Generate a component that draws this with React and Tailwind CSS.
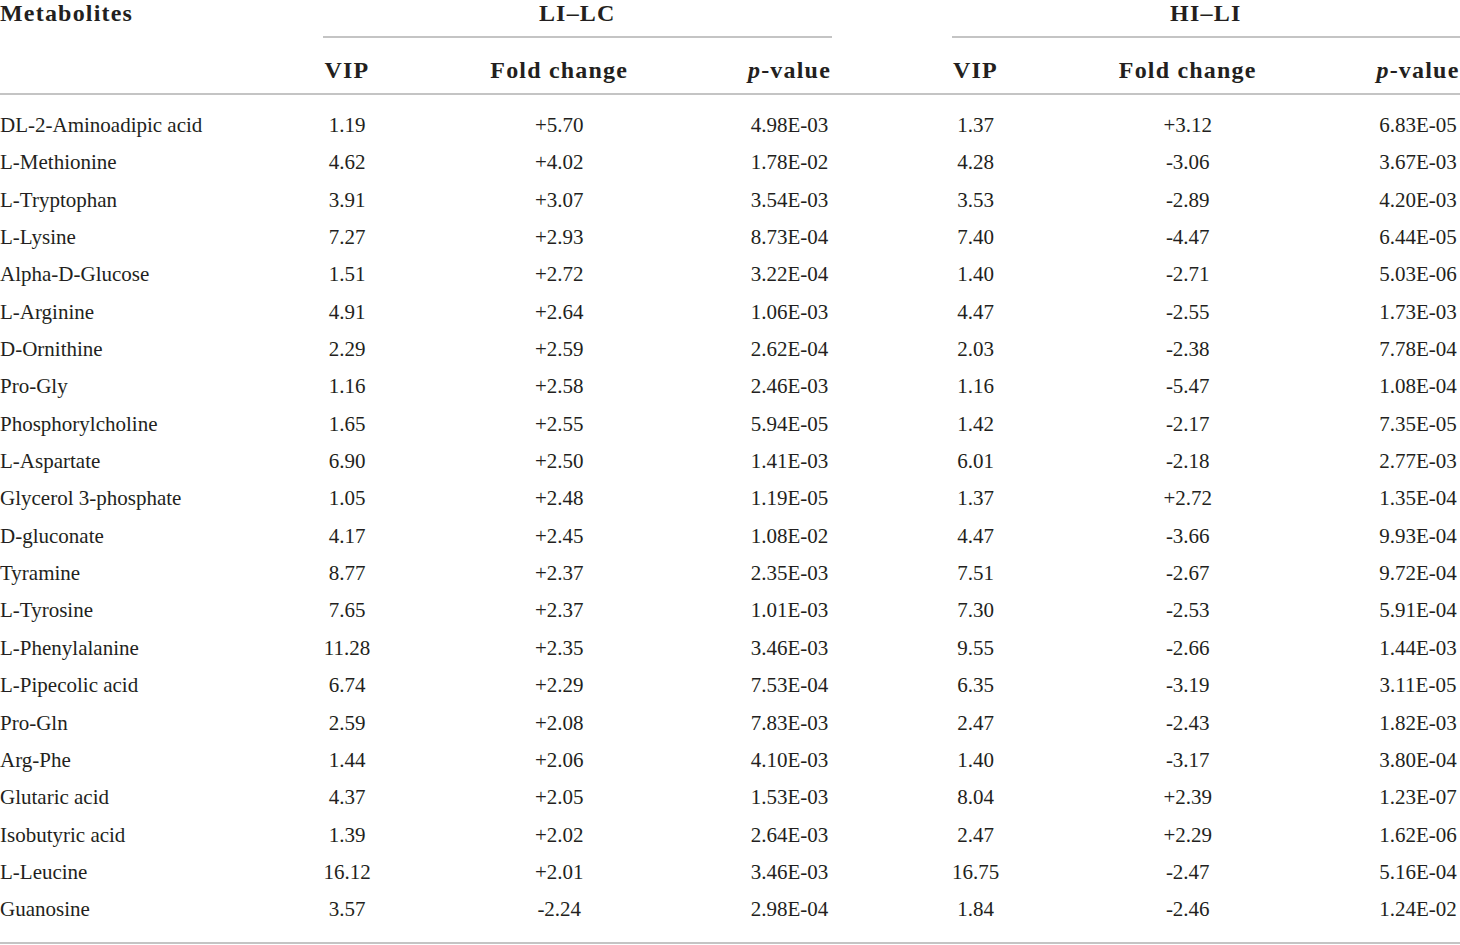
const ROWS = [
  ['DL-2-Aminoadipic acid', '1.19', '+5.70', '4.98E-03', '1.37', '+3.12', '6.83E-05'],
  ['L-Methionine', '4.62', '+4.02', '1.78E-02', '4.28', '-3.06', '3.67E-03'],
  ['L-Tryptophan', '3.91', '+3.07', '3.54E-03', '3.53', '-2.89', '4.20E-03'],
  ['L-Lysine', '7.27', '+2.93', '8.73E-04', '7.40', '-4.47', '6.44E-05'],
  ['Alpha-D-Glucose', '1.51', '+2.72', '3.22E-04', '1.40', '-2.71', '5.03E-06'],
  ['L-Arginine', '4.91', '+2.64', '1.06E-03', '4.47', '-2.55', '1.73E-03'],
  ['D-Ornithine', '2.29', '+2.59', '2.62E-04', '2.03', '-2.38', '7.78E-04'],
  ['Pro-Gly', '1.16', '+2.58', '2.46E-03', '1.16', '-5.47', '1.08E-04'],
  ['Phosphorylcholine', '1.65', '+2.55', '5.94E-05', '1.42', '-2.17', '7.35E-05'],
  ['L-Aspartate', '6.90', '+2.50', '1.41E-03', '6.01', '-2.18', '2.77E-03'],
  ['Glycerol 3-phosphate', '1.05', '+2.48', '1.19E-05', '1.37', '+2.72', '1.35E-04'],
  ['D-gluconate', '4.17', '+2.45', '1.08E-02', '4.47', '-3.66', '9.93E-04'],
  ['Tyramine', '8.77', '+2.37', '2.35E-03', '7.51', '-2.67', '9.72E-04'],
  ['L-Tyrosine', '7.65', '+2.37', '1.01E-03', '7.30', '-2.53', '5.91E-04'],
  ['L-Phenylalanine', '11.28', '+2.35', '3.46E-03', '9.55', '-2.66', '1.44E-03'],
  ['L-Pipecolic acid', '6.74', '+2.29', '7.53E-04', '6.35', '-3.19', '3.11E-05'],
  ['Pro-Gln', '2.59', '+2.08', '7.83E-03', '2.47', '-2.43', '1.82E-03'],
  ['Arg-Phe', '1.44', '+2.06', '4.10E-03', '1.40', '-3.17', '3.80E-04'],
  ['Glutaric acid', '4.37', '+2.05', '1.53E-03', '8.04', '+2.39', '1.23E-07'],
  ['Isobutyric acid', '1.39', '+2.02', '2.64E-03', '2.47', '+2.29', '1.62E-06'],
  ['L-Leucine', '16.12', '+2.01', '3.46E-03', '16.75', '-2.47', '5.16E-04'],
  ['Guanosine', '3.57', '-2.24', '2.98E-04', '1.84', '-2.46', '1.24E-02'],
]

const COLS = 'grid grid-cols-[323px_48px_1fr_84px_120px_48px_1fr_84px]'

function PValue() {
  return (
    <>
      <span className="italic">p</span>-value
    </>
  )
}

export default function App() {
  return (
    <div
      className="w-[1460px] h-[945px] bg-white text-[#231f20] overflow-hidden"
      style={{ fontFamily: '"Liberation Serif", "Times New Roman", serif' }}
    >
      {/* Header */}
      <div className={`${COLS} font-bold text-[24px] leading-[26px] tracking-[1.2px]`}>
        <div className="h-[38px]">Metabolites</div>
        <div className="col-span-3 h-[38px] border-b-2 border-[#c4c4c4] text-center">LI–LC</div>
        <div />
        <div className="col-span-3 h-[38px] border-b-2 border-[#c4c4c4] text-center">HI–LI</div>

        <div className="col-span-8 grid grid-cols-subgrid h-[57px] pt-[19px] border-b-2 border-[#c4c4c4]">
          <div />
          <div className="text-center whitespace-nowrap">VIP</div>
          <div className="text-center">Fold change</div>
          <div className="text-center whitespace-nowrap"><PValue /></div>
          <div />
          <div className="text-center whitespace-nowrap">VIP</div>
          <div className="text-center">Fold change</div>
          <div className="text-center whitespace-nowrap"><PValue /></div>
        </div>
      </div>

      {/* Body */}
      <div className="pt-[12px] pb-[13px] border-b-2 border-[#c4c4c4] text-[21px] leading-[37.35px]">
        {ROWS.map(([name, vip1, fc1, p1, vip2, fc2, p2]) => (
          <div key={name} className={`${COLS} h-[37.35px]`}>
            <div className="whitespace-nowrap">{name}</div>
            <div className="text-center whitespace-nowrap">{vip1}</div>
            <div className="text-center">{fc1}</div>
            <div className="text-center whitespace-nowrap">{p1}</div>
            <div />
            <div className="text-center whitespace-nowrap">{vip2}</div>
            <div className="text-center">{fc2}</div>
            <div className="text-center whitespace-nowrap">{p2}</div>
          </div>
        ))}
      </div>
    </div>
  )
}
